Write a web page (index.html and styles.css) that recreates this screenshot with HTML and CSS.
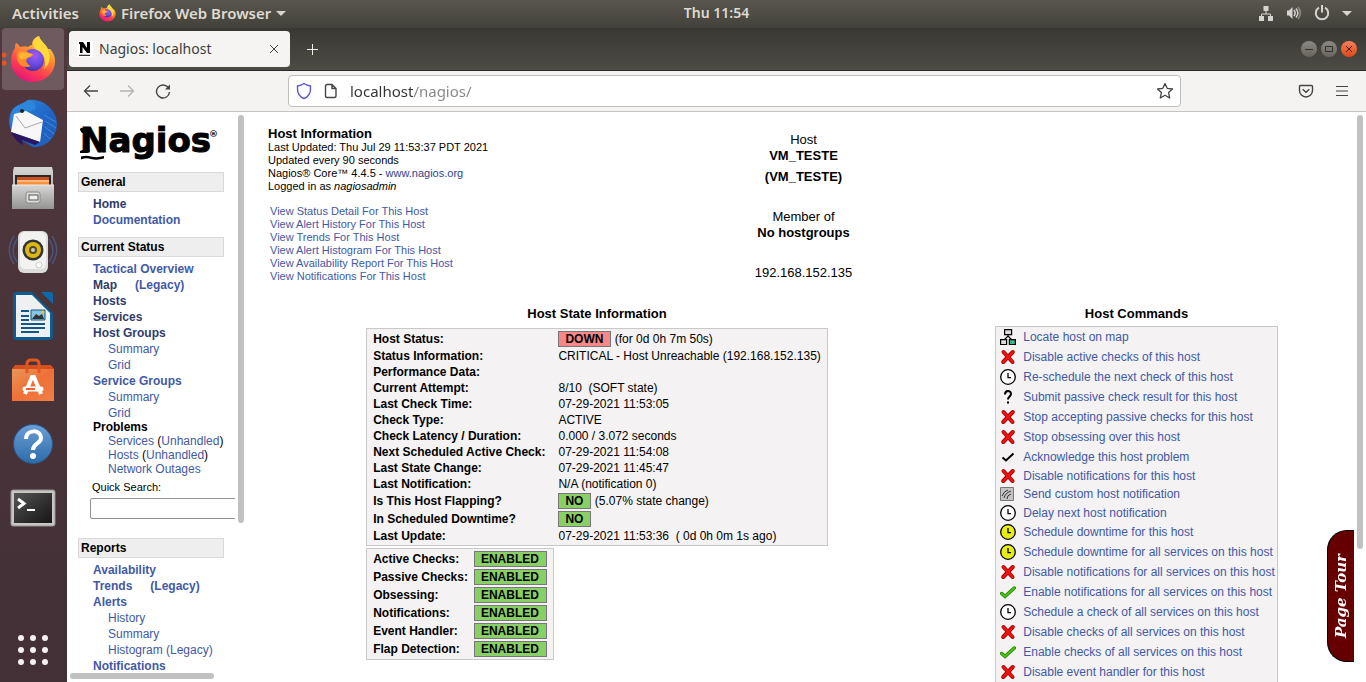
FILE: index.html
```html
<!DOCTYPE html>
<html lang="en">
<head>
<meta charset="utf-8">
<title>Nagios: localhost</title>
<link rel="stylesheet" href="styles.css">
</head>
<body>
<svg class="defs" aria-hidden="true">
  <defs>
    <linearGradient id="ffBody" x1="0.8" y1="0" x2="0.3" y2="1"><stop offset="0" stop-color="#fff44f"/><stop offset="0.35" stop-color="#ff9a2e"/><stop offset="0.7" stop-color="#ff4050"/><stop offset="1" stop-color="#e3127c"/></linearGradient>
    <radialGradient id="ffGlobe" cx="0.6" cy="0.3" r="0.8"><stop offset="0" stop-color="#a05cf5"/><stop offset="0.5" stop-color="#6a4be0"/><stop offset="1" stop-color="#3a2a9c"/></radialGradient>
    <linearGradient id="steel" x1="0" y1="0" x2="0" y2="1"><stop offset="0" stop-color="#d6d6d4"/><stop offset="1" stop-color="#949492"/></linearGradient>
    <linearGradient id="tb" x1="0" y1="0" x2="1" y2="1"><stop offset="0" stop-color="#2f8be6"/><stop offset="0.6" stop-color="#1f63c4"/><stop offset="1" stop-color="#2360b8"/></linearGradient>
    <linearGradient id="bag" x1="0" y1="0" x2="1" y2="1"><stop offset="0" stop-color="#e8975a"/><stop offset="0.5" stop-color="#ee7038"/><stop offset="1" stop-color="#f08048"/></linearGradient>
    <linearGradient id="help" x1="0" y1="0" x2="0" y2="1"><stop offset="0" stop-color="#6c9ed6"/><stop offset="1" stop-color="#2c6ca8"/></linearGradient>
    <linearGradient id="term" x1="0" y1="0" x2="1" y2="1"><stop offset="0" stop-color="#565656"/><stop offset="0.5" stop-color="#333"/><stop offset="1" stop-color="#161616"/></linearGradient>
  </defs>
  <symbol id="firefox" viewBox="0 0 46 48">
    <path d="M1 26C1 20 3 16 5 13 5 11 5 10 6 8 8 9 9 10 10 12 13 11 16 11 18 12 20 10 22 10 22 10 22 4 26 2 29 1 30 6 34 8 37 12L38 14 40 14C43 17 45 21 45 26 45 38 35 47 23 47 11 47 1 38 1 26Z" fill="url(#ffBody)"/>
    <circle cx="23" cy="25" r="11" fill="url(#ffGlobe)"/>
    <path d="M7 17C11 14 17 15 19 18L23 19C23 22 19 22 17 24 15 26 18 30 21 31 15 34 8 30 7 24 6 21 7 19 7 17Z" fill="#ff8a2c"/>
    <path d="M9 18C13 16 17 18 22 19 21 22 18 21 15 24 10 26 8 22 9 18Z" fill="#ffb52e"/>
    <path d="M29 1C30 6 37 9 39 18 41 25 38 31 34 34 37 26 34 18 27 15 22 13 21 5 29 1Z" fill="#ffd83c"/>
  </symbol>
  <symbol id="cross" viewBox="0 0 16 16">
    <path d="M3.5 3L12.5 13M12.8 3L3.2 13" stroke="#900" stroke-width="4" stroke-linecap="round"/>
    <path d="M3.5 3L12.5 13M12.8 3L3.2 13" stroke="#f41111" stroke-width="2.4" stroke-linecap="round"/>
  </symbol>
  <symbol id="clock" viewBox="0 0 16 16">
    <circle cx="8" cy="8" r="7.3" stroke="#000" stroke-width="1.3"/>
    <path d="M8 4V8.7H11" stroke="#000" stroke-width="1.3" fill="none"/>
  </symbol>
  <symbol id="check" viewBox="0 0 16 16">
    <path d="M1.700 9.500L5 12.500 14.300 4" stroke="#1c7a00" stroke-width="3.400" stroke-linecap="round" fill="none"/>
    <path d="M1.700 9.500L5 12.500 14.300 4" stroke="#4cc512" stroke-width="1.900" stroke-linecap="round" fill="none"/>
  </symbol>
</svg>

<header class="topbar">
  <div class="topbar-left">
    <button type="button">Activities</button>
    <button type="button" class="app-menu"><svg width="17" height="18"><use href="#firefox"/></svg>Firefox Web Browser<i class="caret"></i></button>
  </div>
  <time class="clock">Thu 11:54</time>
  <button type="button" class="tray" aria-label="System menu">
    <svg width="16" height="16" viewBox="0 0 16 16" fill="#d5d4d0"><path d="M5.500 1h5v5h-5zM1 11h5v5H1zM10 11h5v5h-5z"/><path d="M8 6v3M3.500 11V9h9v2" stroke="#d5d4d0" fill="none"/></svg>
    <svg width="16" height="16" viewBox="0 0 16 16" fill="none" stroke="#d5d4d0" stroke-width="1.500"><path d="M1 5.500h2L6.500 2v12L3 10.500H1z" fill="#d5d4d0" stroke="none"/><path d="M8 5c1.500 2 1.500 4 0 6M10 3.500c2.500 3 2.500 6 0 9"/><path d="M12 2c3.200 4 3.200 8 0 12" stroke="#8d8b84"/></svg>
    <svg width="16" height="16" viewBox="0 0 16 16" fill="none" stroke="#d5d4d0" stroke-width="2"><path d="M5 2.700a6.200 6.200 0 1 0 6 0M8 0v7.500"/></svg>
    <i class="caret"></i>
  </button>
</header>

<div class="desktop">
  <nav class="dock" aria-label="Dock">
    <button type="button" class="active" aria-label="Firefox"><svg width="46" height="48"><use href="#firefox"/></svg></button>
    <button type="button" aria-label="Thunderbird"><svg width="50" height="50" viewBox="0 0 50 50"><path d="M20 1C34-1 49 10 49 25 49 38 38 49 25 48L8 38C0 30-1 18 5 10 10 4 15 8 20 1Z" fill="url(#tb)"/><path d="M5 10C9 6 14 5 20 1 25 2 29 5 27 10L16 14 6 27C3 24 2 17 5 10Z" fill="#2b86dc"/><path d="M3 33L6 15 18 12 35 21 32 43Z" fill="#f7f7f7"/><path d="M8 17L17 29 34 23" stroke="#aaa" fill="none"/><path d="M3 33L32 43 27 46 14 41 15 46C9 43 5 38 3 33Z" fill="#2c1660"/><path d="M36 16L48 23M37 22L48 29M37 28L46 35M36 34L42 40" stroke="#3a8fe0" stroke-width="1"/><circle cx="14" cy="12" r="2" fill="#222"/></svg></button>
    <button type="button" aria-label="Files"><svg width="44" height="46" viewBox="0 0 44 46"><path d="M3 2H41L42 6V44H2V6Z" fill="url(#steel)"/><path d="M4 10H40V22H4z" fill="#2b2926"/><path d="M6 12H38V20H6z" fill="#c75122"/><path d="M6 15H38V20H6z" fill="#f5903c"/><path d="M6 16H38" stroke="#ffe0bd"/><path d="M1 20H43V44H1z" fill="url(#steel)"/><path d="M1 20H43" stroke="#eee"/><rect x="15" y="27" width="14" height="11" rx="2" fill="#ddd" stroke="#888"/><rect x="18" y="30" width="9" height="5" fill="#eee" stroke="#555"/></svg></button>
    <button type="button" aria-label="Rhythmbox"><svg width="50" height="46" viewBox="0 0 50 46"><g fill="none" stroke="#4b5578" stroke-width="1.500"><path d="M6 7C0 16 0 26 6 35M9 10C4 18 4 26 9 33M44 7C50 16 50 26 44 35M41 10C46 18 46 26 41 33"/></g><rect x="10" y="2" width="30" height="42" rx="6" fill="#dcdddb"/><rect x="12" y="3" width="26" height="37" rx="5" fill="#f2f2f0"/><circle cx="25" cy="21" r="10.500" fill="#333"/><circle cx="25" cy="21" r="8" fill="#ddb716"/><circle cx="25" cy="21" r="4" fill="#544b22"/><circle cx="25" cy="21" r="2" fill="#ccc"/><circle cx="31" cy="36" r="3" fill="#fff" stroke="#ccc"/></svg></button>
    <button type="button" aria-label="LibreOffice Writer"><svg width="42" height="50" viewBox="0 0 42 50"><path d="M4 1H20L41 22V46Q41 49 38 49H4Q1 49 1 46V4Q1 1 4 1Z" fill="#0f5b8f"/><path d="M29 1H38Q41 1 41 4V13Z" fill="#0a6aad"/><path d="M4 4H20L38 22V46H4Z" fill="#eef0f1"/><path d="M9 20H17M9 25H17M9 29H17M9 33H33M9 37H33M9 41H27" stroke="#125884" stroke-width="2"/><path d="M19 19H33V29H19z" fill="#87c4e6" stroke="#125884"/><path d="M20 28L24 23 27 25 30 23 32 28Z" fill="#333"/><circle cx="31" cy="21" r="1.500" fill="#f3c12c"/></svg></button>
    <button type="button" aria-label="Ubuntu Software"><svg width="44" height="46" viewBox="0 0 44 46"><path d="M1 12L4 8H40L43 12V44H1Z" fill="#d94e1e"/><path d="M1 12H43V44H1Z" fill="url(#bag)"/><path d="M16 16V7Q16 3 20 3H24Q28 3 28 7V16" fill="none" stroke="#e2571f" stroke-width="3"/><path d="M14 37L21 20H23L30 37" fill="none" stroke="#fff" stroke-width="4"/><path d="M14 32H30" stroke="#fff" stroke-width="5" stroke-linecap="round"/><path d="M15 32H24" stroke="#e96430" stroke-width="2"/></svg></button>
    <button type="button" aria-label="Help"><svg width="42" height="42" viewBox="0 0 42 42"><circle cx="21" cy="21" r="19.500" fill="url(#help)" stroke="#25588c"/><path d="M14 16C14 6 29 6 29 15 29 21 21 20 21 27" fill="none" stroke="#fff" stroke-width="4"/><circle cx="21" cy="33" r="3" fill="#fff"/></svg></button>
    <button type="button" aria-label="Terminal"><svg width="46" height="38" viewBox="0 0 46 38"><rect x="1" y="1" width="44" height="36" rx="2" fill="#c6c6c3" stroke="#929290"/><path d="M4 4H42V34H4z" fill="url(#term)"/><path d="M8 10L14 14.500 8 19" fill="none" stroke="#fff" stroke-width="3"/><path d="M17 21H25" stroke="#fff" stroke-width="2"/></svg></button>
    <button type="button" class="apps" aria-label="Show Applications"><svg width="32" height="32" viewBox="0 0 32 32" fill="#f2f1f0"><circle cx="4" cy="4" r="3"/><circle cx="16" cy="4" r="3"/><circle cx="28" cy="4" r="3"/><circle cx="4" cy="16" r="3"/><circle cx="16" cy="16" r="3"/><circle cx="28" cy="16" r="3"/><circle cx="4" cy="28" r="3"/><circle cx="16" cy="28" r="3"/><circle cx="28" cy="28" r="3"/></svg></button>
  </nav>

  <div class="window">
    <div class="tabs">
      <div class="tab">
        <svg width="16" height="16" viewBox="0 0 16 16"><path d="M0 0h16v16H0z" fill="#fff"/><path d="M2 1h4l4 6V1h3v11h-3L5.500 6v6H3V3H2z"/><path d="M2 14.300h11" stroke="#000"/></svg>
        <span>Nagios: localhost</span>
        <button type="button" aria-label="Close tab"><svg width="10" height="10" viewBox="0 0 10 10" stroke="#444"><path d="M1 1l8 8M9 1L1 9"/></svg></button>
      </div>
      <button type="button" class="new-tab" aria-label="New tab"><svg width="13" height="13" viewBox="0 0 13 13" stroke="#eee"><path d="M6.500 1v11M1 6.500h11"/></svg></button>
      <div class="controls">
        <button type="button" aria-label="Minimize"><svg width="16" height="16" viewBox="0 0 16 16" stroke="#33322e"><path d="M4 8.500h8"/></svg></button>
        <button type="button" aria-label="Maximize"><svg width="16" height="16" viewBox="0 0 16 16" stroke="#33322e" fill="none"><path d="M4.500 5.500h7v5h-7z"/></svg></button>
        <button type="button" class="close" aria-label="Close"><svg width="16" height="16" viewBox="0 0 16 16" stroke="#4b1d0e"><path d="M5 5l6 6M11 5l-6 6"/></svg></button>
      </div>
    </div>

    <div class="toolbar">
      <button type="button" aria-label="Back"><svg width="16" height="16" viewBox="0 0 16 16" fill="none" stroke="#444" stroke-width="1.300"><path d="M15 8H2M7 2.500L1.500 8 7 13.500"/></svg></button>
      <button type="button" aria-label="Forward"><svg width="16" height="16" viewBox="0 0 16 16" fill="none" stroke="#b5b4b1" stroke-width="1.300"><path d="M1 8H14M9 2.500L14.500 8 9 13.500"/></svg></button>
      <button type="button" aria-label="Reload"><svg width="16" height="16" viewBox="0 0 16 16" fill="none" stroke="#444" stroke-width="1.400"><path d="M13.500 5A6.500 6.500 0 1 0 14.500 9"/><path d="M15 1.500v5h-5z" fill="#444" stroke="none"/></svg></button>
      <div class="url">
        <svg width="16" height="18" viewBox="0 0 16 18" fill="none" stroke="#5a55d2" stroke-width="1.400"><path d="M8 1.500C6 3 4 3.700 1.500 4V7C1.500 11 4 15 8 16.500 12 15 14.500 11 14.500 7V4C12 3.700 10 3 8 1.500Z"/></svg>
        <svg width="14" height="16" viewBox="0 0 14 16" fill="none" stroke="#444" stroke-width="1.400"><path d="M3 1.500H8L12 5.500V13Q12 14.500 10.500 14.500H3Q1.500 14.500 1.500 13V3Q1.500 1.500 3 1.500ZM8 1.500V5.500H12"/></svg>
        <input type="text" aria-label="Address" value="localhost/nagios/">
        <button type="button" aria-label="Bookmark"><svg width="18" height="18" viewBox="0 0 18 18" fill="none" stroke="#444" stroke-width="1.300" stroke-linejoin="round"><path d="M9 1.500L11.200 6.300 16.500 7 12.600 10.600 13.700 16 9 13.300 4.300 16 5.400 10.600 1.500 7 6.800 6.300Z"/></svg></button>
      </div>
      <button type="button" aria-label="Pocket"><svg width="16" height="16" viewBox="0 0 16 16" fill="none" stroke="#444" stroke-width="1.400"><path d="M2.500 2.500H13.500Q14.500 2.500 14.500 3.500V7.500A6.500 6.500 0 0 1 1.500 7.500V3.500Q1.500 2.500 2.500 2.500ZM4.700 6.300L8 9.300 11.300 6.300"/></svg></button>
      <button type="button" aria-label="Menu"><svg width="14" height="14" viewBox="0 0 14 14" stroke="#444" stroke-width="1.200"><path d="M1 2.500h12M1 7h12M1 11.500h12"/></svg></button>
    </div>

    <div class="frames">
      <aside class="side">
        <div class="side-content">
          <a class="logo" href="#" aria-label="Nagios"><svg width="146" height="40" viewBox="0 0 146 40"><text x="2" y="30" class="logo-text">Nagios</text><text x="131" y="15" class="logo-mark">®</text><path d="M2 8Q2 5 5 6H12L10 11H4ZM2 29Q5 27 12 28L10 31H2ZM3 34.500Q8 33 13 34.500 19 36 26 34V36.500Q19 38.500 13 37 8 35.500 3 37.500Z"/></svg></a>

          <h2>General</h2>
          <ul>
            <li><a class="seen" href="#">Home</a></li>
            <li><a href="#">Documentation</a></li>
          </ul>

          <h2>Current Status</h2>
          <ul>
            <li><a href="#">Tactical Overview</a></li>
            <li><a class="seen" href="#">Map</a><a class="legacy" href="#">(Legacy)</a></li>
            <li><a class="seen" href="#">Hosts</a></li>
            <li><a class="seen" href="#">Services</a></li>
            <li><a class="seen" href="#">Host Groups</a>
              <ul><li><a href="#">Summary</a></li><li><a href="#">Grid</a></li></ul></li>
            <li><a href="#">Service Groups</a>
              <ul><li><a href="#">Summary</a></li><li><a href="#">Grid</a></li></ul></li>
            <li class="problems">Problems
              <ul>
                <li><a href="#">Services</a> (<a href="#">Unhandled</a>)</li>
                <li><a href="#">Hosts</a> (<a href="#">Unhandled</a>)</li>
                <li><a href="#">Network Outages</a></li>
              </ul></li>
          </ul>
          <form class="search">
            <label for="q">Quick Search:</label>
            <input id="q" type="text">
          </form>

          <h2>Reports</h2>
          <ul>
            <li><a href="#">Availability</a></li>
            <li><a href="#">Trends</a><a class="legacy" href="#">(Legacy)</a></li>
            <li><a href="#">Alerts</a>
              <ul><li><a href="#">History</a></li><li><a href="#">Summary</a></li><li><a href="#">Histogram (Legacy)</a></li></ul></li>
            <li><a href="#">Notifications</a></li>
          </ul>
        </div>
        <i class="thumb side-v"></i>
        <i class="thumb side-h"></i>
      </aside>

      <main class="main">
        <section class="summary">
          <div class="info">
            <h1>Host Information</h1>
            <p>Last Updated: Thu Jul 29 11:53:37 PDT 2021<br>Updated every 90 seconds<br>Nagios® Core™ 4.4.5 - <a class="seen-url" href="#">www.nagios.org</a><br>Logged in as <em>nagiosadmin</em></p>
            <p class="views"><a href="#">View Status Detail For This Host</a><br><a href="#">View Alert History For This Host</a><br><a href="#">View Trends For This Host</a><br><a href="#">View Alert Histogram For This Host</a><br><a href="#">View Availability Report For This Host</a><br><a href="#">View Notifications For This Host</a></p>
          </div>
          <div class="host">
            <p>Host<br><b>VM_TESTE</b></p>
            <p class="alias"><b>(VM_TESTE)</b></p>
            <p class="groups">Member of<br><b>No hostgroups</b></p>
            <p>192.168.152.135</p>
          </div>
        </section>

        <section class="details">
          <div class="state">
            <h2>Host State Information</h2>
            <table class="panel">
              <tr class="tall"><th scope="row">Host Status:</th><td><span class="badge down">DOWN</span> (for 0d 0h 7m 50s)</td></tr>
              <tr><th scope="row">Status Information:</th><td>CRITICAL - Host Unreachable (192.168.152.135)</td></tr>
              <tr><th scope="row">Performance Data:</th><td></td></tr>
              <tr><th scope="row">Current Attempt:</th><td>8/10&nbsp; (SOFT state)</td></tr>
              <tr><th scope="row">Last Check Time:</th><td>07-29-2021 11:53:05</td></tr>
              <tr><th scope="row">Check Type:</th><td>ACTIVE</td></tr>
              <tr><th scope="row">Check Latency / Duration:</th><td>0.000 / 3.072 seconds</td></tr>
              <tr><th scope="row">Next Scheduled Active Check:</th><td>07-29-2021 11:54:08</td></tr>
              <tr><th scope="row">Last State Change:</th><td>07-29-2021 11:45:47</td></tr>
              <tr><th scope="row">Last Notification:</th><td>N/A (notification 0)</td></tr>
              <tr class="tall"><th scope="row">Is This Host Flapping?</th><td><span class="badge">NO</span> (5.07% state change)</td></tr>
              <tr class="tall"><th scope="row">In Scheduled Downtime?</th><td><span class="badge">NO</span></td></tr>
              <tr><th scope="row">Last Update:</th><td>07-29-2021 11:53:36&nbsp; ( 0d 0h 0m 1s ago)</td></tr>
            </table>
            <table class="panel flags">
              <tr class="tall"><th scope="row">Active Checks:</th><td><span class="badge">ENABLED</span></td></tr>
              <tr class="tall"><th scope="row">Passive Checks:</th><td><span class="badge">ENABLED</span></td></tr>
              <tr class="tall"><th scope="row">Obsessing:</th><td><span class="badge">ENABLED</span></td></tr>
              <tr class="tall"><th scope="row">Notifications:</th><td><span class="badge">ENABLED</span></td></tr>
              <tr class="tall"><th scope="row">Event Handler:</th><td><span class="badge">ENABLED</span></td></tr>
              <tr class="tall"><th scope="row">Flap Detection:</th><td><span class="badge">ENABLED</span></td></tr>
            </table>
          </div>

          <div class="commands">
            <h2>Host Commands</h2>
            <ul>
              <li><svg viewBox="0 0 16 16" stroke="#000" stroke-width="1.200"><path d="M8 6v2M4 11L8 7l4 4" fill="none"/><path d="M4.600.600h7v5h-7z" fill="#ddd"/><path d="M.600 10.600h6v5h-6z" fill="#ddd"/><path d="M9.400 10.600h6v5h-6z" fill="#35b888"/></svg><a href="#">Locate host on map</a></li>
              <li><svg><use href="#cross"/></svg><a href="#">Disable active checks of this host</a></li>
              <li><svg fill="#fff"><use href="#clock"/></svg><a href="#">Re-schedule the next check of this host</a></li>
              <li><svg viewBox="0 0 16 16"><path d="M5 5.500C5 1 11 1 11 5 11 7.500 8 7.500 8 10.500" fill="none" stroke="#000" stroke-width="2"/><path d="M7 12.500h2v2H7z"/></svg><a href="#">Submit passive check result for this host</a></li>
              <li><svg><use href="#cross"/></svg><a href="#">Stop accepting passive checks for this host</a></li>
              <li><svg><use href="#cross"/></svg><a href="#">Stop obsessing over this host</a></li>
              <li><svg viewBox="0 0 16 16" fill="none"><path d="M2.500 8.500L6 11.500 13.500 4.500" stroke="#000" stroke-width="2"/></svg><a href="#">Acknowledge this host problem</a></li>
              <li class="tight"><svg><use href="#cross"/></svg><a href="#">Disable notifications for this host</a></li>
              <li class="tight"><svg class="notify" viewBox="0 0 14 14"><path d="M.500.500h13v13H.500z" fill="#c4c4c4" stroke="#777"/><path d="M2 9Q4 4 8 3M4 11Q5 6 11 4M7 12Q7 8 11 7" fill="none" stroke="#333"/></svg><a href="#">Send custom host notification</a></li>
              <li class="snug"><svg fill="#fff"><use href="#clock"/></svg><a href="#">Delay next host notification</a></li>
              <li><svg fill="#e8ee12"><use href="#clock"/></svg><a href="#">Schedule downtime for this host</a></li>
              <li><svg fill="#e8ee12"><use href="#clock"/></svg><a href="#">Schedule downtime for all services on this host</a></li>
              <li><svg><use href="#cross"/></svg><a href="#">Disable notifications for all services on this host</a></li>
              <li><svg><use href="#check"/></svg><a href="#">Enable notifications for all services on this host</a></li>
              <li><svg fill="#fff"><use href="#clock"/></svg><a href="#">Schedule a check of all services on this host</a></li>
              <li><svg><use href="#cross"/></svg><a href="#">Disable checks of all services on this host</a></li>
              <li><svg><use href="#check"/></svg><a href="#">Enable checks of all services on this host</a></li>
              <li><svg><use href="#cross"/></svg><a href="#">Disable event handler for this host</a></li>
            </ul>
          </div>
        </section>
        <button type="button" class="tour"><span>Page Tour</span></button>
        <i class="thumb main-v"></i>
      </main>
    </div>
  </div>
</div>
</body>
</html>
```
FILE: styles.css
```css
* { box-sizing: border-box; }
body {
  margin: 0;
  height: 100vh;
  display: flex;
  flex-direction: column;
  overflow: hidden;
  background: #fff;
  color: #000;
  font: 12px/16px "Liberation Sans", Arial, sans-serif;
}
button { border: 0; padding: 0; background: none; font: inherit; color: inherit; display: flex; align-items: center; justify-content: center; }
h1, h2, p, ul { margin: 0; padding: 0; }
ul { list-style: none; }
a { color: #4259a6; text-decoration: none; }
svg { display: block; flex: none; }
.defs { position: absolute; width: 0; height: 0; }

/* Desktop top bar */
.topbar {
  flex: none;
  height: 28px;
  padding-bottom: 2px;
  display: grid;
  grid-template-columns: 67px 1fr auto 1fr;
  align-items: center;
  background: linear-gradient(#59564d, #42413b);
  color: #dfdbd2;
  font: 600 15px/20px "Noto Sans", "Open Sans", sans-serif;
}
.topbar-left { grid-column: 1 / 3; display: flex; gap: 20px; padding-left: 12px; }
.app-menu { gap: 5px; }
.clock { font-size: 14px; }
.caret { border: 5px solid transparent; border-top-color: #d5d4d0; border-bottom: 0; }
.tray { justify-self: end; gap: 12px; padding-right: 14px; }

/* Dock */
.desktop { flex: 1; min-height: 0; display: flex; }
.dock {
  flex: none;
  width: 67px;
  display: flex;
  flex-direction: column;
  background: linear-gradient(#50373d, #423036);
}
.dock button { position: relative; height: 64px; width: 62px; margin-left: 2px; }
.dock .active { height: 62px; margin-bottom: 2px; border-radius: 4px; background: #6f5b5f; }
.dock .active::before {
  content: "";
  position: absolute;
  left: 0;
  top: 24px;
  width: 5px;
  height: 14px;
  background: radial-gradient(circle at 2px 3px, #e95420 2px, transparent 3px), radial-gradient(circle at 2px 11px, #e95420 2px, transparent 3px);
}
.dock .apps { margin-top: auto; }

/* Browser window */
.window { flex: 1; min-width: 0; display: flex; flex-direction: column; }
.tabs {
  flex: none;
  height: 43px;
  display: flex;
  align-items: center;
  padding: 0 9px 0 2px;
  background: linear-gradient(#3a3833, #4c4b44);
  border-bottom: 1px solid #2b2a26;
}
.tab {
  width: 221px;
  height: 36px;
  display: flex;
  align-items: center;
  gap: 6px;
  padding: 0 11px 0 8px;
  border-radius: 4px;
  background: #f5f4f2;
  color: #3d3d3d;
  font: 14px/20px "Noto Sans", "Open Sans", sans-serif;
}
.tab span { flex: 1; white-space: nowrap; }
.new-tab { width: 32px; height: 32px; margin-left: 6px; }
.controls { margin-left: auto; display: flex; gap: 4px; }
.controls button { border-radius: 8px; background: linear-gradient(#8b8982, #67655e); }
.controls .close { background: linear-gradient(#f5825b, #dd4817); }
.toolbar {
  flex: none;
  height: 41px;
  display: flex;
  align-items: center;
  padding: 0 6px;
  background: #f4f3f1;
  border-bottom: 1px solid #c6c5c2;
}
.toolbar > button { width: 36px; height: 32px; }
.url {
  flex: 1;
  height: 32px;
  display: flex;
  align-items: center;
  gap: 12px;
  margin: 0 107px;
  padding: 0 6px 0 7px;
  border: 1px solid #bfbebb;
  border-radius: 4px;
  background: #fff;
}
.url input {
  flex: 1;
  min-width: 0;
  border: 0;
  padding: 0;
  outline: 0;
  color: transparent;
  background: linear-gradient(90deg, #333 64px, #858585 64px);
  background-clip: text;
  -webkit-background-clip: text;
  font: 15px/20px "Noto Sans", "Open Sans", sans-serif;
}

/* Frames */
.frames { flex: 1; min-height: 0; display: flex; }
.thumb { position: absolute; border-radius: 3px; background: #c1c1c1; }
.side { position: relative; flex: none; width: 178px; overflow: hidden; }
.side-content { width: 168px; padding: 10px 0 0 11px; overflow: hidden; }
.side-v { right: 1px; top: 3px; width: 6px; height: 408px; }
.side-h { left: 3px; bottom: 3px; width: 144px; height: 6px; }
.logo { display: block; margin-bottom: 10px; }
.logo svg { overflow: visible; }
.logo-text { font: bold 34px "DejaVu Sans", sans-serif; stroke: #000; stroke-width: 1px; }
.logo-mark { font: bold 9px "DejaVu Sans", sans-serif; }
.side h2 {
  width: 146px;
  padding: 1px 2px;
  border: 1px solid #d9d9d9;
  background: #eee;
  font-size: 12px;
  line-height: 16px;
}
.side-content > ul { padding: 4px 0 9px 15px; font-weight: bold; }
.side-content ul ul { padding-left: 15px; font-weight: normal; white-space: nowrap; }
.side .seen { color: #2f3b6b; }
.legacy { margin-left: 18px; }
.problems { line-height: 14px; margin-top: -1px; }
.search { display: flex; flex-direction: column; margin-bottom: 19px; font-size: 11px; line-height: 14px; }
.search label { padding-left: 14px; margin-bottom: 4px; margin-top: -5px; }
.search input { width: 180px; height: 21px; margin-left: 12px; border: 1px solid #8f8f9d; border-radius: 2px; background: #fff; }

.main { position: relative; flex: 1; min-width: 0; overflow: hidden; padding: 15px 12px 0 8px; }
.main-v { right: 3px; top: 3px; width: 6px; height: 434px; }
.summary { display: grid; grid-template-columns: 1fr 1fr 1fr; }
.info { padding-left: 15px; font-size: 11px; line-height: 13px; }
h1, .main h2 { font-size: 13px; line-height: 14px; font-weight: bold; }
.seen-url { color: #2f4590; }
.views { padding: 12px 0 0 2px; }
.host { padding-top: 5px; text-align: center; font-size: 13px; line-height: 16px; }
.alias { padding: 5px 0 24px; }
.groups { padding-bottom: 24px; }
.details { display: grid; grid-template-columns: 688fr 391fr; padding: 24px 22px 0 0; }
.state, .commands { justify-self: center; }
.main h2 { text-align: center; }
.panel { border: 1px solid #c8c8c8; border-collapse: separate; border-spacing: 0; background: #f4f2f2; padding: 1px 6px; margin-top: 7px; }
.panel th, .panel td { height: 16px; padding: 0; text-align: left; vertical-align: middle; white-space: nowrap; }
.panel td { padding-left: 13px; }
.panel .tall > * { height: 18px; }
.flags { margin-top: 2px; }
.flags td { padding-left: 6px; }
.badge { display: inline-block; vertical-align: middle; padding: 0 7px 0 6px; border: 1px solid #777; background: #88d066; font-weight: bold; line-height: 14px; }
.badge.down { background: #f88888; }
.commands ul { margin-top: 5px; padding: 0 2px 0 3px; border: 1px solid #c8c8c8; background: #f4f2f2; }
.commands li { height: 20px; display: flex; align-items: center; gap: 7px; white-space: nowrap; }
.commands .tight { height: 18px; }
.commands .snug { height: 19px; }
.commands svg { width: 16px; height: 16px; margin-left: 1px; }
.commands .notify { width: 14px; height: 14px; margin: 0 2px 0 1px; }
.tour {
  position: absolute;
  right: 12px;
  bottom: 20px;
  width: 27px;
  height: 132px;
  border: 1px solid #000;
  border-right: 0;
  border-radius: 20px 0 0 20px;
  background: #600;
  color: #fff;
  font: italic bold 15px/20px "DejaVu Serif", serif;
}
.tour span { writing-mode: vertical-rl; transform: rotate(180deg); white-space: nowrap; }
```
